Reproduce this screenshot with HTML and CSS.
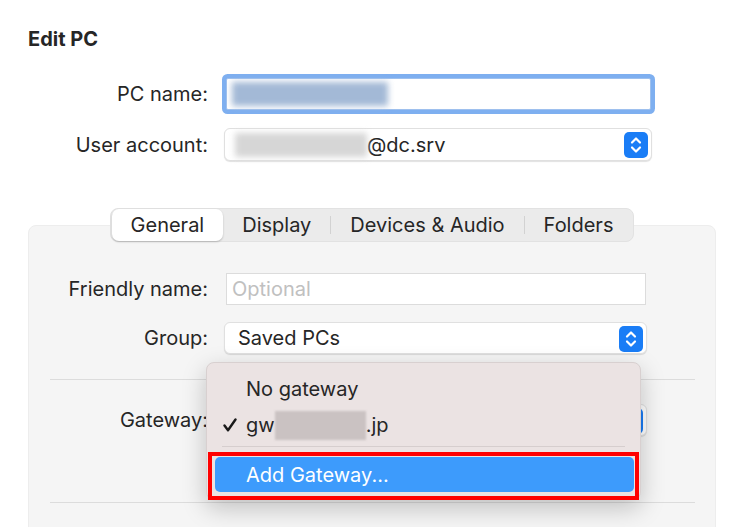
FILE: index.html
```html
<!DOCTYPE html>
<html>
<head>
    <link rel="stylesheet" href="styles.css">
</head>
<body>
    <div class="window">
        <h1 class="title">Edit PC</h1>

        <div class="row">
            <div class="label">PC name:</div>
            <div class="field field-focus top-field">
                <span class="blur blur-blue"></span>
            </div>
        </div>
        <div class="row">
            <div class="label">User account:</div>
            <div class="popup top-popup">
                <span class="blur blur-gray"></span>
                <span class="value">@dc.srv</span>
                <svg class="stepper" viewBox="0 0 24 26">
                    <rect x="0" y="0" width="24" height="26" rx="5" fill="#1a7df6"/>
                    <polyline points="8,10.5 12,6.5 16,10.5" fill="none" stroke="#fff" stroke-width="2.2" stroke-linecap="round" stroke-linejoin="round"/>
                    <polyline points="8,15.5 12,19.5 16,15.5" fill="none" stroke="#fff" stroke-width="2.2" stroke-linecap="round" stroke-linejoin="round"/>
                </svg>
            </div>
        </div>

        <div class="tabs">
            <div class="tab tab-active">General</div>
            <div class="tab">Display</div>
            <div class="tab-sep"></div>
            <div class="tab">Devices &amp; Audio</div>
            <div class="tab-sep"></div>
            <div class="tab">Folders</div>
        </div>

        <div class="panel">
            <div class="row panel-first">
                <div class="label">Friendly name:</div>
                <div class="field panel-field">
                    <span class="placeholder">Optional</span>
                </div>
            </div>
            <div class="row">
                <div class="label">Group:</div>
                <div class="popup panel-popup">
                    <span class="value value-group">Saved PCs</span>
                    <svg class="stepper" viewBox="0 0 24 26">
                        <rect x="0" y="0" width="24" height="26" rx="5" fill="#1a7df6"/>
                        <polyline points="8,10.5 12,6.5 16,10.5" fill="none" stroke="#fff" stroke-width="2.2" stroke-linecap="round" stroke-linejoin="round"/>
                        <polyline points="8,15.5 12,19.5 16,15.5" fill="none" stroke="#fff" stroke-width="2.2" stroke-linecap="round" stroke-linejoin="round"/>
                    </svg>
                </div>
            </div>

            <div class="sep sep-top"></div>

            <div class="row row-gateway">
                <div class="label">Gateway:</div>
                <div class="popup panel-popup">
                    <svg class="stepper" viewBox="0 0 24 26">
                        <rect x="0" y="0" width="24" height="26" rx="5" fill="#1a7df6"/>
                        <polyline points="8,10.5 12,6.5 16,10.5" fill="none" stroke="#fff" stroke-width="2.2" stroke-linecap="round" stroke-linejoin="round"/>
                        <polyline points="8,15.5 12,19.5 16,15.5" fill="none" stroke="#fff" stroke-width="2.2" stroke-linecap="round" stroke-linejoin="round"/>
                    </svg>
                </div>
            </div>

            <div class="sep sep-bottom"></div>

            <!-- open gateway menu -->
            <div class="menu">
                <div class="menu-item">No gateway</div>
                <div class="menu-item">
                    <svg class="check" viewBox="0 0 14 14">
                        <polyline points="1.5,7.5 5,12.3 12.5,1.5" fill="none" stroke="#1a1a1a" stroke-width="2.4" stroke-linecap="round" stroke-linejoin="round"/>
                    </svg>
                    gw<span class="blur-menu"></span>.jp
                </div>
                <div class="menu-sep"></div>
                <div class="menu-item menu-item-active">Add Gateway...</div>
                <div class="highlight-box"></div>
            </div>
        </div>
    </div>
</body>
</html>
```

FILE: styles.css
```css
body {
    margin: 0;
    font-family: Inter, "Noto Sans", sans-serif;
    color: #262626;
    background-color: #fff;
    overflow: hidden;
}

.window {
    padding: 27px 29px 0 28px;
}

.title {
    margin: 0 0 27px 0;
    font-size: 20px;
    line-height: 24px;
    font-weight: 700;
    color: #262626;
}

.row {
    display: flex;
    align-items: center;
    margin-bottom: 18px;
}

.label {
    width: 180px;
    text-align: right;
    font-size: 20px;
    flex-shrink: 0;
}

.field {
    position: relative;
    height: 32px;
    background-color: #fff;
    border: 1px solid #dcdcdc;
    box-sizing: border-box;
    margin-left: 18px;
    display: flex;
    align-items: center;
}

.field-focus {
    border-color: #9ec0ee;
    border-radius: 2px;
    box-shadow: 0 0 0 4px #7eaff0;
}

.top-field {
    width: 425px;
}

.popup {
    position: relative;
    height: 33px;
    background-color: #fff;
    border: 1px solid #e0e0e0;
    border-radius: 6px;
    box-shadow: 0 1px 1px rgba(0, 0, 0, 0.12);
    box-sizing: border-box;
    margin-left: 16px;
    display: flex;
    align-items: center;
    font-size: 20px;
}

.top-popup {
    width: 428px;
}

.stepper {
    position: absolute;
    right: 3px;
    top: 3px;
    width: 24px;
    height: 26px;
}

.value {
    font-size: 20px;
}

.value-group {
    padding-left: 13px;
}

.blur {
    display: inline-block;
    height: 24px;
    filter: blur(3px);
}

.blur-blue {
    margin-left: 5px;
    width: 156px;
    background-color: #a3b9d6;
}

.blur-gray {
    margin-left: 10px;
    width: 132px;
    background-color: #d6d6d6;
}

.placeholder {
    padding-left: 5px;
    font-size: 20px;
    color: #c0c0c0;
}

/* segmented tabs */
.tabs {
    position: relative;
    z-index: 1;
    display: flex;
    align-items: center;
    width: max-content;
    margin: 47px auto -17px auto;
    height: 34px;
    padding: 0 1px;
    box-sizing: border-box;
    background-color: #ebebeb;
    border: 1px solid #e2e2e2;
    border-radius: 8px;
}

.tab {
    font-size: 20px;
    padding: 0 19px;
    height: 32px;
    line-height: 32px;
}

.tab-active {
    background-color: #fff;
    border-radius: 7px;
    box-shadow: 0 1px 2px rgba(0, 0, 0, 0.22);
}

.tab-sep {
    width: 1px;
    height: 18px;
    background-color: #d2d2d2;
}

/* panel */
.panel {
    position: relative;
    background-color: #f5f5f5;
    border: 1px solid #ededed;
    border-radius: 8px;
    padding: 47px 0 60px 0;
}

.panel .label {
    width: 179px;
}

.panel-first {
    margin-bottom: 17px;
}

.panel-field {
    width: 420px;
}

.panel-popup {
    width: 423px;
    height: 32px;
}

.sep {
    height: 1px;
    background-color: #dcdcdc;
    margin: 0 20px 0 21px;
}

.sep-top {
    margin-top: 25px;
    margin-bottom: 24px;
}

.row-gateway {
    margin-bottom: 66px;
}

/* dropdown menu */
.menu {
    position: absolute;
    left: 177px;
    top: 136px;
    width: 435px;
    height: 138px;
    box-sizing: border-box;
    padding-top: 8px;
    background-color: #ebe3e3;
    border: 1px solid #d8d0d0;
    border-radius: 8px;
    box-shadow: 0 8px 24px rgba(0, 0, 0, 0.22);
    z-index: 2;
}

.menu-item {
    position: relative;
    height: 36px;
    line-height: 36px;
    padding-left: 39px;
    font-size: 20px;
    display: flex;
    align-items: center;
}

.check {
    position: absolute;
    left: 16px;
    top: 11px;
    width: 14px;
    height: 14px;
}

.blur-menu {
    display: inline-block;
    width: 91px;
    height: 29px;
    background-color: #cac2c2;
    filter: blur(1px);
}

.menu-sep {
    height: 1px;
    margin: 3px 15px 0 15px;
    background-color: #d6cece;
}

.menu-item-active {
    margin: 10px 6px 0 8px;
    height: 35px;
    padding-left: 31px;
    background-color: #3d9bfc;
    color: #fff;
    border-radius: 5px;
}

.highlight-box {
    position: absolute;
    left: 1px;
    top: 89px;
    width: 431px;
    height: 48px;
    box-sizing: border-box;
    border: 4px solid #ff0000;
}
```
